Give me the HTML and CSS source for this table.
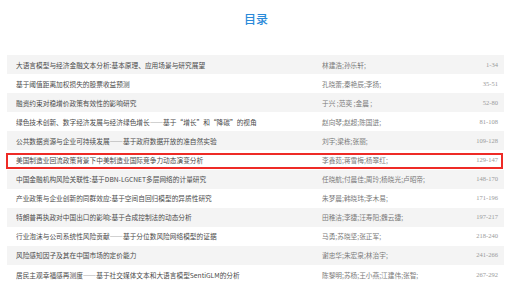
FILE: index.html
```html
<!DOCTYPE html>
<html lang="zh-CN">
<head>
<meta charset="utf-8">
<title>目录</title>
<link rel="stylesheet" href="styles.css">
</head>
<body>
<div class="page">
  <h1 class="title">目录</h1>
  <div class="toc">
    <div class="row odd"><span class="t">大语言模型与经济金融文本分析:基本原理、应用场景与研究展望</span><span class="a">林建浩;孙乐轩;</span><span class="p">1-34</span></div>
    <div class="row"><span class="t">基于阈值距离加权损失的股票收益预测</span><span class="a">孔晓蕾;秦艳辰;李扬;</span><span class="p">35-51</span></div>
    <div class="row odd"><span class="t">融资约束对稳增价政策有效性的影响研究</span><span class="a">于兴 ;范奕 ;金晨 ;</span><span class="p">52-80</span></div>
    <div class="row"><span class="t">绿色技术创新、数字经济发展与经济绿色增长——基于“增长”和“降碳”的视角</span><span class="a">赵向琴;赵超;陈国进;</span><span class="p">81-108</span></div>
    <div class="row odd"><span class="t">公共数据资源与企业可持续发展——基于政府数据开放的准自然实验</span><span class="a">刘宇;梁栋;张丽;</span><span class="p">109-128</span></div>
    <div class="row marked"><span class="t">美国制造业回流政策背景下中美制造业国际竞争力动态演变分析</span><span class="a">李鑫茹;蒋雪梅;杨翠红;</span><span class="p">129-147</span></div>
    <div class="row odd"><span class="t">中国金融机构风险关联性:基于DBN-LGCNET多层网络的计量研究</span><span class="a">任晓航;付晨佳;周玲;杨晓光;卢昭帝;</span><span class="p">148-170</span></div>
    <div class="row"><span class="t">产业政策与企业创新的同群效应:基于空间自回归模型的异质性研究</span><span class="a">朱梦晨;韩晓玮;李木易;</span><span class="p">171-196</span></div>
    <div class="row odd"><span class="t">特朗普再执政对中国出口的影响:基于合成控制法的动态分析</span><span class="a">田稚洁;李捷;汪寿阳;魏云捷;</span><span class="p">197-217</span></div>
    <div class="row"><span class="t">行业泡沫与公司系统性风险贡献——基于分位数风险网络模型的证据</span><span class="a">马勇;苏晓坚;张正军;</span><span class="p">218-240</span></div>
    <div class="row odd"><span class="t">风险感知因子及其在中国市场的定价能力</span><span class="a">谢忠华;朱宏泉;林治宇;</span><span class="p">241-266</span></div>
    <div class="row"><span class="t">居民主观幸福感再测度——基于社交媒体文本和大语言模型SentiGLM的分析</span><span class="a">陈黎明;苏杨;王小燕;江建伟;张智;</span><span class="p">267-292</span></div>
  </div>
</div>
</body>
</html>
```

FILE: styles.css
```css
html, body {
  margin: 0;
  padding: 0;
  background: #ffffff;
}

.page {
  width: 512px;
  font-family: "Noto Sans CJK SC", "Noto Sans", sans-serif;
}

.title {
  margin: 0;
  height: 55px;
  padding-top: 11px;
  box-sizing: border-box;
  text-align: center;
  font-size: 12px;
  line-height: 16px;
  font-weight: 500;
  color: #2b8ad9;
}

.toc {
  margin: 0 8px 0 7px;
}

.row {
  position: relative;
  display: grid;
  grid-template-columns: 306px 1fr 50px;
  align-items: center;
  height: 19.1px;
  padding: 0 6px 0 9px;
  font-size: 6.7px;
  line-height: 10px;
  white-space: nowrap;
}

.row.odd {
  background: #f4f4f4;
}

.row.marked::after {
  content: "";
  position: absolute;
  left: -1px;
  right: 1px;
  top: 3px;
  bottom: 1px;
  border: 2px solid #ee2b26;
}

.t {
  color: #4a4a4a;
  overflow: hidden;
}

.a {
  color: #7a7a7a;
}

.p {
  text-align: right;
  color: #9a9a9a;
  font-family: "Liberation Serif", serif;
  font-size: 6.5px;
}
```
